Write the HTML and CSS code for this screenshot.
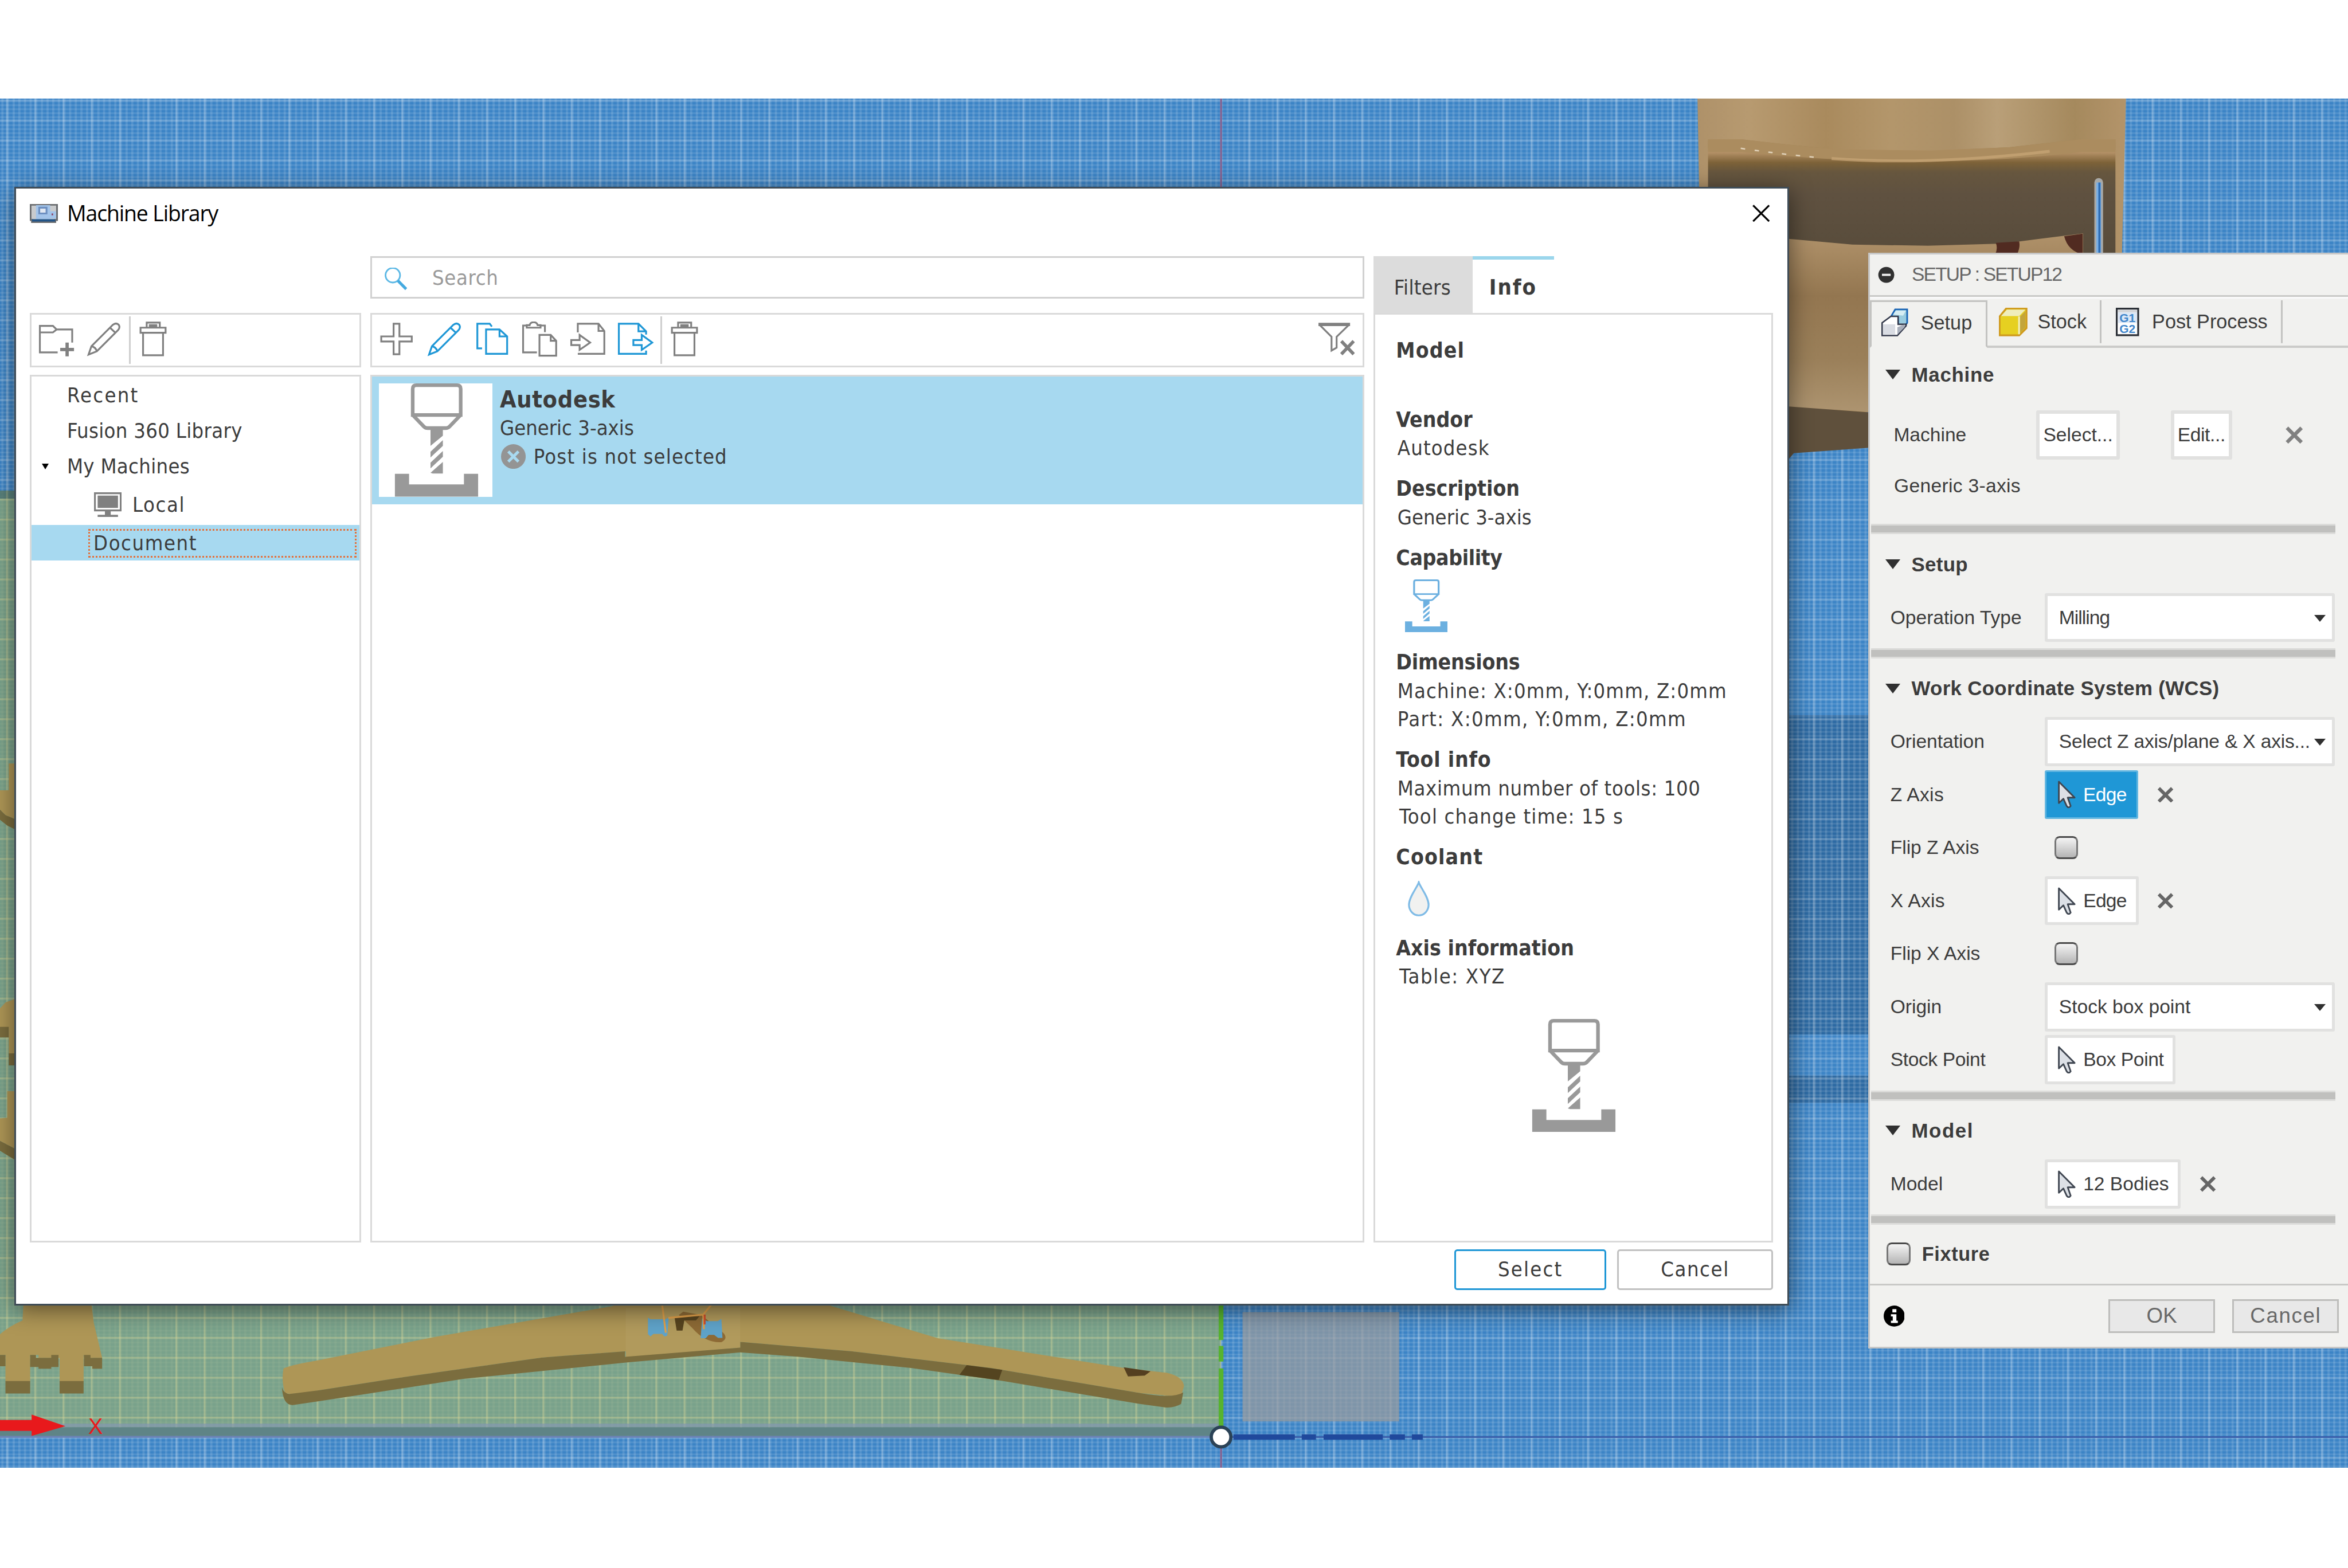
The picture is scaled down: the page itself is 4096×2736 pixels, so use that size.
FILE: index.html
```
<!DOCTYPE html>
<html lang="en">
<head>
<meta charset="utf-8">
<title>Machine Library</title>
<link rel="stylesheet" href="styles.css">
</head>
<body>
<svg class="defs" aria-hidden="true">
  <defs>
    <symbol id="i-folder" viewBox="0 0 100 100"><path d="M53 85H4V12H40L50 22H93V58M4 30H40L50 22"/><path class="thick" d="M79 58V96M60 77H98"/></symbol>
    <symbol id="i-pencil" viewBox="0 0 100 100"><path d="M7 91L15 68L74 9Q83 2 90 9Q95 16 88 24L30 82ZM15 68Q26 70 30 82M66 17L81 31"/></symbol>
    <symbol id="i-trash" viewBox="0 0 100 100"><path d="M16 17H85V31H16ZM23 31V93H78V31M33 16V3H69V16"/><path class="thick" d="M39 12H62"/></symbol>
    <symbol id="i-plus" viewBox="0 0 100 100"><path d="M42 6H58V41H92V55H58V90H42V55H8V41H42Z"/></symbol>
    <symbol id="i-copy" viewBox="0 0 100 100"><path d="M49 14L43 6H9V74H22M33 22H70L91 41V89H33ZM70 22V41H91"/></symbol>
    <symbol id="i-paste" viewBox="0 0 100 100"><path d="M42 85H4V11H14M52 11H64V29M14 17V10H22Q24 2 33 2Q42 2 44 10H52V17ZM49 37H80L95 53V94H49ZM80 37V53H95"/></symbol>
    <symbol id="i-import" viewBox="0 0 100 100"><path d="M22 30V6H79L95 26V89H22M79 6V26H95M4 51H27V37L56 58L27 78V65H4Z"/></symbol>
    <symbol id="i-export" viewBox="0 0 100 100"><path d="M79 36V27L58 6H4V89H79V80M58 6V27H79M44 51H67V37L96 58L67 78V65H44Z"/></symbol>
    <symbol id="i-filter" viewBox="0 0 100 100"><path d="M2 8L36 42V80L50 72V42L85 8"/><path class="thick" d="M0 8H87M63 54L97 90M97 54L63 90"/></symbol>
    <symbol id="i-mill" viewBox="0 0 312 312">
      <path fill="none" stroke="currentColor" stroke-width="10" d="M103 5H215Q225 5 225 15V87H93V15Q93 5 103 5ZM93 87L124 119Q128 123 134 123H184Q190 123 194 119L225 87"/>
      <path fill="currentColor" d="M142 125H176V144L142 172ZM176 156V172L142 204V188ZM176 186V202L142 234V218ZM176 216V248H148L142 246Z"/>
      <path fill="currentColor" d="M44 249H83V278H234V249H273V312H44Z"/>
    </symbol>
    <symbol id="i-cursor" viewBox="0 0 50 76"><path d="M2.5 3V62L15 50L24 70Q30 78 35 70L27 47H46Z" fill="#dce0e6" stroke="#3f4651" stroke-width="4.5" stroke-linejoin="round"/></symbol>
    <symbol id="i-x" viewBox="0 0 48 48"><path d="M4 4L44 44M44 4L4 44" fill="none" stroke="currentColor" stroke-width="10"/></symbol>
    <pattern id="minor" x="19.2" y="331" width="15.536" height="10.986" patternUnits="userSpaceOnUse"><path d="M0 0H6V10.986H0Z" fill="#fff" opacity=".12"/><path d="M0 0H15.536V4.500H0Z" fill="#fff" opacity=".11"/></pattern>
    <pattern id="major" x="16.7" y="328.5" width="77.68" height="54.93" patternUnits="userSpaceOnUse"><path d="M0 0H5V54.93H0Z" fill="#fff" opacity=".24"/><path d="M0 0H77.68V5H0Z" fill="#fff" opacity=".18"/></pattern>
    <pattern id="majorgreen" x="16.7" y="328.5" width="77.68" height="54.93" patternUnits="userSpaceOnUse"><path d="M0 0H5V54.93H0Z" fill="#e2dc95" opacity=".25"/><path d="M0 0H77.68V5H0Z" fill="#e2dc95" opacity=".25"/></pattern>
    <linearGradient id="wood" x1="0" x2="1" y1="0" y2="0"><stop offset="0" stop-color="#ae9169"/><stop offset=".12" stop-color="#b79a70"/><stop offset=".3" stop-color="#a98a5d"/><stop offset=".45" stop-color="#b3966b"/><stop offset=".6" stop-color="#ac9067"/><stop offset=".7" stop-color="#b99f78"/><stop offset=".88" stop-color="#a5895d"/><stop offset="1" stop-color="#b3946a"/></linearGradient>
    <linearGradient id="seat" x1="0" x2="0" y1="0" y2="1"><stop offset="0" stop-color="#b0926a"/><stop offset=".35" stop-color="#937650"/><stop offset=".7" stop-color="#9a7f59"/><stop offset="1" stop-color="#ad9470"/></linearGradient>
    <linearGradient id="curve" x1="0" x2="0" y1="0" y2="1"><stop offset="0" stop-color="#a88a5e"/><stop offset=".06" stop-color="#9c7f50"/><stop offset=".1" stop-color="#b8946a"/><stop offset=".19" stop-color="#7d6238"/><stop offset=".27" stop-color="#66563e"/><stop offset=".45" stop-color="#5f5140"/><stop offset="1" stop-color="#574b3a"/></linearGradient>
  </defs>
</svg>

<main class="scene">
  <svg class="canvas" viewBox="0 271 6461 3769" preserveAspectRatio="none">
    <rect y="271" width="6461" height="3769" fill="#3c84c6"/>
    <path d="M4900 1968H5160V2847H4900ZM4900 2960H5160V3035H4900Z" fill="#0d2f52" opacity=".3"/>
    <rect y="271" width="6461" height="3769" fill="url(#minor)"/>
    <rect y="271" width="6461" height="3769" fill="url(#major)"/>
    <rect y="1350" width="3360" height="2602" fill="#92ad74" opacity=".72"/>
    <rect y="1350" width="3360" height="22" fill="#2d5566" opacity=".45"/>
    <rect y="1350" width="3360" height="2602" fill="url(#majorgreen)"/>
    <rect y="3918" width="3360" height="10" fill="#8499b0" opacity=".7"/>
    <rect y="3928" width="3360" height="24" fill="#5f8486"/>
    <rect y="3952" width="3360" height="5" fill="#6b82b6"/>
    <path d="M3360 271V530M3360 3975V4040" stroke="#84608f" stroke-width="5"/>

    <g class="chair">
      <path d="M4671 271H5850L5839 700V900H5700L5300 1134H4920L4676 560Z" fill="url(#wood)"/>
      <path d="M4700 383H4792L4915 397L5048 411L5313 414L5529 405L5727 383H5821V720H4700Z" fill="url(#curve)"/>
      <path d="M4700 383H4792L4915 397L5048 411L5313 414L5529 405L5727 383H5821V418H5727Q5300 470 4792 418H4700Z" fill="#ab8c5f"/>
      <path d="M5040 436Q5300 456 5640 416" fill="none" stroke="#c9a678" stroke-width="8" opacity=".7"/>
      <path d="M4790 408Q4900 424 5000 433" fill="none" stroke="#f3ead8" stroke-width="4" stroke-dasharray="12 26" opacity=".75"/>
      <path d="M4900 655L5097 673L5305 676L5512 670L5732 642V720H5160V1134L4900 1119Z" fill="url(#seat)"/>
      <path d="M5492 668L5556 664Q5560 680 5550 700H5490Q5498 684 5492 668ZM5680 650L5731 643V700Q5690 690 5680 650Z" fill="#512b21"/>
      <path d="M4900 1117L5160 1136V1231L4936 1247L4923 1262H4900Z" fill="#5f503c"/>
      <path d="M5775 502V720" stroke="#a9a9a6" stroke-width="24" stroke-linecap="round"/>
      <path d="M5775 502V720" stroke="#7ab0e6" stroke-width="13"/><path d="M5777 502V720" stroke="#2f6db4" stroke-width="6"/>
    </g>

    <g fill="#ae9656">
      <path d="M0 2175H24V2101H46V2256L15 2243L0 2228Z"/>
      <path d="M0 2775L15 2759L46 2747V2902H24V2828H0Z"/>
      <path d="M0 3078L20 3076V3003H46V3164L0 3140Z"/>
      <path d="M66 3560H248L258 3640L281 3737H231V3729H230V3802H164V3737H106V3729H83V3802H15V3729H0V3672Q25 3650 62 3634Z"/>
      <path d="M780 3767Q784 3760 880 3743L1193 3680L1684 3595L1740 3570H2250L2287 3594L2580 3683L2756 3711L3093 3765L3210 3778Q3255 3788 3258 3815L3252 3836Q3235 3844 3200 3840L3137 3834L2727 3765L2345 3719L2037 3693V3709L1722 3735V3719L1492 3736L1110 3790L880 3826Q800 3840 784 3834Q774 3800 780 3767Z"/>
    </g>
    <path d="M1722 3600H2037V3709L1722 3735Z" fill="#b39d60" opacity=".6"/>
    <g fill="#7b6d3e">
      <path d="M0 2228L15 2243L46 2256V2285L20 2272L0 2256ZM0 2826H24V2855H0ZM24 2899H46V2932H24ZM0 3140L46 3164V3195L0 3167Z"/>
      <path d="M15 3801H83V3835H15ZM164 3801H230V3835H164ZM83 3729H99V3737H141V3729H161V3762H141V3767H106V3762H83ZM231 3729H249V3737H281V3767H254V3760H231ZM0 3729H15V3760H0Z"/>
      <path d="M776 3818Q782 3838 800 3836L880 3826L1110 3790L1492 3736L1720 3719V3734L2037 3709V3693L2345 3719L2727 3765L3137 3834Q3230 3850 3256 3832L3250 3864Q3230 3876 3203 3873L3137 3864L2756 3800L2507 3765L2199 3734L2037 3722L1722 3750L1275 3795L880 3856L805 3867Q778 3866 776 3818Z"/>
    </g>
    <path d="M2660 3757L2758 3770L2748 3798L2640 3784Z" fill="#544420"/>
    <path d="M3092 3763L3166 3774L3150 3786L3104 3788Z" fill="#543f20"/>
    <path d="M1868 3619L1880 3610L1930 3619L1980 3660Q2010 3680 1985 3694Q1940 3696 1905 3655Z" fill="#8d6a35"/>
    <path d="M1856 3625L1925 3622L1915 3634H1883L1878 3662H1862Z" fill="#57441f"/>
    <path d="M1783 3626L1790 3631H1832L1840 3626L1836 3676L1828 3678L1822 3671H1798L1790 3678L1783 3672ZM1932 3628L1945 3636H1975L1985 3630L1988 3682H1976L1965 3674H1950L1942 3683H1928Z" fill="#5fa3c9"/>
    <path d="M1822 3590L1832 3668M1839 3627L1935 3618M1958 3590L1935 3618L1937 3658" fill="none" stroke="#e0a04a" stroke-width="5"/>
    <path d="M1939 3618V3645" stroke="#d04a2a" stroke-width="5"/>

    <rect x="3419" y="3611" width="431" height="301" fill="#999b9e" opacity=".72"/>
    <path d="M3360 3580V3688M3360 3704V3747M3360 3766V3935" stroke="#57b32f" stroke-width="13"/>
    <path d="M3380 3955H6461" stroke="#3a5fab" stroke-width="5"/>
    <path d="M3394 3955H3563M3582 3955H3621M3642 3955H3805M3824 3955H3866M3885 3955H3915" stroke="#20499c" stroke-width="15"/>
    <circle cx="3360" cy="3955" r="27" fill="#fff" stroke="#2b4256" stroke-width="9"/>
    <path d="M0 3908H87V3893L180 3925L87 3952V3938H0Z" fill="#e8191c"/>
    <text class="axis" x="243" y="3946" textLength="42">X</text>
  </svg>

  <section class="dialog">
    <header class="titlebar">
      <svg class="appicon" viewBox="0 0 77 52"><path d="M2 2H75V44H70V50H6V44H2Z" fill="#c9cbcd" stroke="#6b6d70" stroke-width="5"/><path d="M17 3H56V42H17ZM56 20H72V40H56Z" fill="#a3c4ea"/><path d="M26 10H46V26H26Z" fill="#dfe7f2" stroke="#6d8fc0" stroke-width="5"/><path d="M60 26H64V31H60Z" fill="#8b3a5a"/><path d="M6 42H70V48H6Z" fill="#225487"/></svg>
      <h1 class="sn18">Machine Library</h1>
      <svg class="close" viewBox="0 0 48 48"><path d="M2 2L46 46M46 2L2 46" stroke="#000" stroke-width="5"/></svg>
    </header>
    <div class="cols">
      <div class="col side">
        <div class="toolbar">
          <svg class="ic"><use href="#i-folder"/></svg>
          <svg class="ic"><use href="#i-pencil"/></svg>
          <i class="bar"></i>
          <svg class="ic"><use href="#i-trash"/></svg>
        </div>
        <ul class="box tree">
          <li class="s34">Recent</li>
          <li class="s05">Fusion 360 Library</li>
          <li class="s05 open">My Machines</li>
          <li class="local s25"><svg class="monitor" viewBox="0 0 76 68"><path d="M2.500 2.500H73.500V50H2.500Z" fill="#fff" stroke="#808080" stroke-width="5"/><path d="M10 9H66V43H10ZM30 50H46V62H66V68H10V62H30Z" fill="#808080"/></svg>Local</li>
          <li class="doc"><span class="s25">Document</span></li>
        </ul>
      </div>
      <div class="col">
        <div class="search">
          <svg viewBox="0 0 64 62"><circle cx="24" cy="21" r="20" fill="none" stroke="#5cb8e5" stroke-width="4.500"/><path d="M38 36L61 59" stroke="#45aae0" stroke-width="8"/></svg>
          <span class="s1">Search</span>
        </div>
        <div class="toolbar">
          <svg class="ic"><use href="#i-plus"/></svg>
          <svg class="ic blue"><use href="#i-pencil"/></svg>
          <svg class="ic blue"><use href="#i-copy"/></svg>
          <svg class="ic"><use href="#i-paste"/></svg>
          <svg class="ic"><use href="#i-import"/></svg>
          <svg class="ic blue"><use href="#i-export"/></svg>
          <i class="bar"></i>
          <svg class="ic"><use href="#i-trash"/></svg>
          <svg class="ic end"><use href="#i-filter"/></svg>
        </div>
        <div class="box">
          <article class="machine">
            <svg class="thumb"><use href="#i-mill"/></svg>
            <div>
              <h2 class="s1">Autodesk</h2>
              <p>Generic 3-axis</p>
              <p class="warn s18"><svg viewBox="0 0 68 68"><circle cx="34" cy="34" r="34" fill="#949494"/><path d="M20 20L48 48M48 20L20 48" stroke="#a8d9f0" stroke-width="8"/></svg>Post is not selected</p>
            </div>
          </article>
        </div>
      </div>
      <div class="col info">
        <nav class="tabs"><span class="s05">Filters</span><b class="s3">Info</b></nav>
        <div class="box details">
          <h3 class="s18 first">Model</h3>
          <h3>Vendor</h3><p class="s18">Autodesk</p>
          <h3>Description</h3><p>Generic 3-axis</p>
          <h3 class="sn07">Capability</h3>
          <svg class="cap" viewBox="44 0 229 312" preserveAspectRatio="none"><use href="#i-mill" width="312" height="312"/></svg>
          <h3 class="sn03">Dimensions</h3><p class="s18">Machine: X:0mm, Y:0mm, Z:0mm</p><p class="s2">Part: X:0mm, Y:0mm, Z:0mm</p>
          <h3 class="s12">Tool info</h3><p class="s1">Maximum number of tools: 100</p><p class="s18 in">Tool change time: 15 s</p>
          <h3 class="s18">Coolant</h3>
          <svg class="drop" viewBox="0 0 60 98"><path d="M30 4C34 18 57 44 57 66A27 29 0 0 1 3 66C3 44 26 18 30 4Z" fill="#f1f1f0" stroke="#7fbbe6" stroke-width="5"/></svg>
          <h3>Axis information</h3><p class="s25 in">Table: XYZ</p>
          <svg class="big"><use href="#i-mill"/></svg>
        </div>
      </div>
    </div>
    <footer class="actions"><button class="primary s34">Select</button><button class="s25">Cancel</button></footer>
  </section>

  <aside class="panel">
    <header class="phead">
      <svg viewBox="0 0 46 46"><circle cx="23" cy="23" r="22" fill="#303030"/><path d="M11 23H35" stroke="#eee" stroke-width="6"/></svg>
      <span class="sn3">SETUP : SETUP12</span>
    </header>
    <nav class="ptabs">
      <div class="ptab on">
        <svg viewBox="0 0 74 78"><path d="M28 20L38 3H71V40L60 54H46V26H26Z" fill="#9accdf" stroke="#1763b4" stroke-width="4.500"/><path d="M32 17L40 6H68L60 20Z" fill="#d6edf3"/><path d="M2 40L26 22H46V44H68V48L44 75H2Z" fill="#fff" stroke="#343a4c" stroke-width="4"/><path d="M5 44H38V72H5Z" fill="#d9dce3"/><path d="M44 52L64 44V52L44 72Z" fill="#a9afbb"/></svg>
        <span>Setup</span>
      </div>
      <div class="ptab stock">
        <svg viewBox="0 0 78 78"><path d="M2 24L20 2H76V56L56 76H2Z" fill="#e6d021" stroke="#cf9a1e" stroke-width="5"/><path d="M6 23L22 5H73L56 23Z" fill="#efedbc"/><path d="M58 25L73 9V54L58 70Z" fill="#c4a53a"/><path d="M53 24H58V73H53Z" fill="#f1eebb"/></svg>
        <span>Stock</span>
      </div>
      <div class="ptab post">
        <svg viewBox="0 0 64 78"><path d="M2.500 2.500H61.500V75.500H2.500Z" fill="#fff" stroke="#2b2f36" stroke-width="5"/><path d="M6 6H58V13H6Z" fill="#d4d6d9"/><path d="M6 13H58V42H6Z" fill="#dde8f6"/><text class="gcode" x="10" y="40">G1</text><text class="gcode" x="10" y="69">G2</text></svg>
        <span>Post Process</span>
      </div>
      <div class="rest"></div>
    </nav>

    <section class="sec first">
      <h4 class="s12">Machine</h4>
      <div class="row machine-row"><label>Machine</label><button>Select...</button><button class="edit sn07">Edit...</button><svg class="del"><use href="#i-x"/></svg></div>
      <p class="s05">Generic 3-axis</p>
    </section>
    <section class="sec">
      <h4 class="s05">Setup</h4>
      <div class="row"><label>Operation Type</label><div class="select"><span class="sn15">Milling</span></div></div>
    </section>
    <section class="sec">
      <h4 class="s05">Work Coordinate System (WCS)</h4>
      <div class="row"><label>Orientation</label><div class="select"><span class="sn03">Select Z axis/plane &amp; X axis...</span></div></div>
      <div class="row"><label class="s05">Z Axis</label><div class="pick on"><svg><use href="#i-cursor"/></svg><span class="sn1">Edge</span></div><svg class="x"><use href="#i-x"/></svg></div>
      <div class="row"><label>Flip Z Axis</label><i class="check"></i></div>
      <div class="row"><label class="s05">X Axis</label><div class="pick"><svg><use href="#i-cursor"/></svg><span class="sn1">Edge</span></div><svg class="x"><use href="#i-x"/></svg></div>
      <div class="row"><label>Flip X Axis</label><i class="check"></i></div>
      <div class="row"><label>Origin</label><div class="select"><span>Stock box point</span></div></div>
      <div class="row"><label class="sn07">Stock Point</label><div class="pick"><svg><use href="#i-cursor"/></svg><span class="sn07">Box Point</span></div></div>
    </section>
    <section class="sec">
      <h4 class="s25">Model</h4>
      <div class="row"><label>Model</label><div class="pick"><svg><use href="#i-cursor"/></svg><span>12 Bodies</span></div><svg class="x"><use href="#i-x"/></svg></div>
    </section>
    <div class="fixture"><i class="check"></i><b class="s1">Fixture</b></div>
    <footer class="pfoot">
      <svg viewBox="0 0 58 58"><circle cx="29" cy="29" r="29" fill="#000"/><path d="M24 10H35V19H24ZM20 24H35V42H39V48H20V42H25V30H20Z" fill="#fff"/></svg>
      <button>OK</button><button class="s25">Cancel</button>
    </footer>
  </aside>
</main>
</body>
</html>
```
FILE: styles.css
```
/* 1rem = 100 design units; the design is 6461 units wide */
html { font-size: 63.396px; }
* { box-sizing: border-box; margin: 0; padding: 0; }
body { background: #fff; width: 64.61rem; height: 43.157rem; overflow: hidden; font-family: "DejaVu Sans Condensed", "DejaVu Sans", sans-serif; font-size: .57rem; color: #3c3c3c; }
.defs { position: absolute; width: 0; height: 0; }
svg { display: block; flex: none; }
h1, h2, h3, h4, p, span, label, li, b { white-space: nowrap; }
button { font: inherit; color: inherit; white-space: nowrap; }

/* letter spacing steps */
.sn3 { letter-spacing: -.029rem; } .sn18 { letter-spacing: -.018rem; } .sn15 { letter-spacing: -.015rem; }
.sn1 { letter-spacing: -.011rem; } .sn07 { letter-spacing: -.006rem; } .sn03 { letter-spacing: -.003rem; }
.s05 { letter-spacing: .005rem; } .s1 { letter-spacing: .01rem; } .s12 { letter-spacing: .012rem; }
.s18 { letter-spacing: .018rem; } .s2 { letter-spacing: .021rem; } .s25 { letter-spacing: .025rem; }
.s3 { letter-spacing: .031rem; } .s34 { letter-spacing: .035rem; }

.scene { position: relative; height: 100%; padding-top: 2.71rem; }
.canvas { width: 64.61rem; height: 37.69rem; }
.axis { font: 60px "Liberation Sans", sans-serif; fill: #e8191c; }

/* Machine library window */
.dialog { position: absolute; left: .39rem; top: 5.14rem; width: 48.84rem; height: 30.8rem; border: .05rem solid #3f4c57; background: #fff; display: flex; flex-direction: column; box-shadow: .02rem .12rem .6rem rgba(0,0,0,.5); }
.titlebar { height: 1.38rem; display: flex; align-items: center; padding: 0 .48rem 0 .39rem; }
.titlebar h1 { font: 400 .59rem/1.4rem "Open Sans", sans-serif; color: #000; margin-left: .25rem; flex: 1; }
.appicon { width: .77rem; height: .52rem; }
.close { width: .48rem; height: .48rem; }
.cols { display: grid; grid-template-columns: 9.11rem 27.35rem 11rem; gap: .25rem; height: 27.15rem; margin: .48rem 0 0 .39rem; }
.col { display: flex; flex-direction: column; min-height: 0; }
.side { padding-top: 1.56rem; }
.toolbar { height: 1.5rem; border: .05rem solid #dadada; display: flex; align-items: center; gap: .315rem; padding: 0 .21rem 0 .18rem; margin-bottom: .21rem; flex: none; }
.ic { width: 1rem; height: 1rem; fill: none; stroke: #808080; stroke-width: 5; overflow: visible; }
.thick { stroke-width: 9; }
.blue { stroke: #1f97d6; }
.end { margin-left: auto; }
.bar { width: .05rem; height: 1.31rem; background: #cfcfcf; margin: 0 -.21rem 0 -.13rem; }
.box { flex: 1; border: .05rem solid #dadada; }
.search { height: 1.17rem; border: .05rem solid #d1d1d1; margin-bottom: .39rem; display: flex; align-items: center; padding-left: .33rem; gap: .69rem; color: #9a9a9a; }
.search svg { width: .64rem; height: .62rem; margin-top: .1rem; }
.search span { line-height: 1; margin-top: .04rem; }

.tree { list-style: none; padding-top: .03rem; }
.tree li { height: .98rem; line-height: .97rem; padding-left: .97rem; }
.tree .open { position: relative; }
.tree .open::before { content: ""; position: absolute; left: .27rem; top: .4rem; border: .105rem solid transparent; border-top: .16rem solid #000; border-bottom: 0; }
.tree .local { height: 1.12rem; line-height: 1.12rem; display: flex; align-items: center; padding-left: 1.71rem; gap: .3rem; }
.monitor { width: .76rem; height: .68rem; }
.tree .doc { background: #a7d9f0; padding: .1rem .08rem .1rem 1.56rem; }
.doc span { display: block; height: .78rem; line-height: .7rem; border: .05rem dotted #e4703a; padding-left: .09rem; margin-top: .01rem; }

.machine { height: 3.51rem; background: #a7d9f0; display: flex; padding: .19rem; gap: .21rem; }
.thumb { width: 3.12rem; height: 3.12rem; background: #fff; color: #999; }
.machine h2 { font-size: .65rem; line-height: .8rem; margin-top: .04rem; }
.machine p { line-height: .78rem; }
.machine .warn { display: flex; align-items: center; gap: .22rem; padding-left: .03rem; }
.warn svg { width: .68rem; height: .68rem; }

.tabs { height: 1.57rem; display: flex; line-height: 1.74rem; flex: none; }
.tabs span { width: 2.73rem; background: #dcdcdc; padding-left: .57rem; }
.tabs b { width: 2.24rem; border-top: .1rem solid #9bd6ec; padding-left: .46rem; line-height: 1.54rem; font-size: .6rem; }
.details { padding: .59rem 0 0 .58rem; }
.details h3 { font-size: .585rem; line-height: .78rem; margin-top: .34rem; }
.details h3.first { margin: 0 0 1.13rem; }
.details h3.first + h3 { margin-top: 0; }
.details p { line-height: .78rem; padding-left: .04rem; }
.details p.in { padding-left: .09rem; }
.cap { width: 1.17rem; height: 1.45rem; color: #6cb0e0; margin: .2rem 0 .1rem .24rem; }
.cap + h3 { margin-top: .45rem; }
.drop { width: .6rem; height: .98rem; margin: .26rem 0 .1rem .33rem; }
.drop + h3 { margin-top: .48rem; }
.big { width: 3.12rem; height: 3.12rem; color: #999; margin: .775rem 0 0 3.31rem; }

.actions { display: flex; justify-content: flex-end; gap: .3rem; margin: .19rem .4rem 0 0; }
.actions button { width: 4.28rem; height: 1.12rem; border: .05rem solid #c1c1c1; border-radius: .08rem; background: #fff; padding-bottom: .03rem; }
.actions .primary { width: 4.18rem; border-color: #1f97d6; }

/* Setup panel */
.panel { position: absolute; left: 51.4rem; top: 6.95rem; width: 13.21rem; height: 30.17rem; border: .05rem solid #c6c6c6; border-right: 0; background: #f1f1ef; font-family: "Liberation Sans", Arial, sans-serif; font-size: .53rem; display: flex; flex-direction: column; overflow: hidden; }
.phead { height: 1.17rem; border-bottom: .05rem solid #c9c9c7; display: flex; align-items: center; padding-left: .23rem; gap: .47rem; color: #666; flex: none; }
.phead svg { width: .46rem; height: .46rem; }
.ptabs { height: 1.4rem; border-top: .05rem solid #fafafa; display: flex; padding-top: .05rem; flex: none; font-size: .54rem; }
.ptab { display: flex; align-items: center; border-bottom: .07rem solid #cbcbc9; padding-bottom: .04rem; }
.ptab.on { width: 3.24rem; border: .05rem solid #c3c3c1; border-bottom-color: transparent; padding-left: .28rem; padding-bottom: .07rem; }
.on svg { width: .74rem; height: .78rem; margin-right: .34rem; }
.stock { width: 3.15rem; padding-left: .32rem; }
.stock svg { width: .78rem; height: .78rem; margin-right: .28rem; }
.post { width: 4.98rem; padding-left: .39rem; }
.post svg { width: .64rem; height: .78rem; margin-right: .35rem; }
.stock, .post { background: linear-gradient(#c3c3c1, #c3c3c1) right top / .05rem 1.18rem no-repeat; }
.rest { flex: 1; border-bottom: .07rem solid #cbcbc9; }
.gcode { font: 700 33px "Liberation Sans", sans-serif; fill: #3f86cb; }

.sec { flex: none; padding-bottom: .395rem; position: relative; }
.sec::after { content: ""; display: block; position: absolute; left: .04rem; right: .35rem; bottom: 0; height: .19rem; background: #c0c0be; border: solid #dcdcda; border-width: .05rem 0; }
.sec.first { height: 5.14rem; }
.sec h4 { font-size: .55rem; height: 1.56rem; line-height: 1.44rem; padding: .1rem 0 0 1.15rem; position: relative; }
.sec.first h4 { height: 1.48rem; padding-top: 0; line-height: 1.48rem; }
.sec h4::before { content: ""; position: absolute; left: .43rem; bottom: .6rem; border: .21rem solid transparent; border-top: .27rem solid #303030; border-bottom: 0; }
.row { height: 1.46rem; display: flex; align-items: center; padding-left: .57rem; }
.row label { width: 4.25rem; }
.row button { height: 1.35rem; width: 2.31rem; background: #fff; border: .1rem solid #e1e1e0; border-radius: .05rem; }
.machine-row { height: 1.85rem; padding-left: .66rem; }
.machine-row label { width: 3.92rem; }
.row .edit { width: 1.68rem; margin-left: 1.4rem; }
.del { width: .48rem; height: .48rem; margin-left: 1.47rem; color: #808080; }
.sec > p { line-height: .96rem; padding-left: .67rem; }
.select { width: 7.98rem; height: 1.35rem; background: #fff; border: .08rem solid #e1e1e0; border-radius: .05rem; display: flex; align-items: center; padding-left: .31rem; position: relative; }
.select::after { content: ""; position: absolute; right: .18rem; top: .52rem; border: .16rem solid transparent; border-top: .19rem solid #303030; border-bottom: 0; }
.pick { height: 1.35rem; background: #fff; border: .08rem solid #e1e1e0; border-radius: .05rem; display: flex; align-items: center; padding: 0 .25rem 0 .29rem; }
.pick svg { width: .5rem; height: .76rem; margin: 0 .19rem 0 0; }
.pick.on { background: #1f97d6; border-color: #62b6e0; border-width: .05rem; padding: 0 .28rem 0 .32rem; color: #fff; }
.x { width: .46rem; height: .44rem; margin-left: .51rem; color: #666; }
.check { display: block; width: .66rem; height: .63rem; border: .05rem solid #4a4a4a; border-left-color: #777; border-right-color: #777; border-radius: .14rem; background: linear-gradient(#f4f4f4, #b4b4b4); }
.row .check { margin-left: .26rem; }
.fixture { height: 1.62rem; display: flex; align-items: center; padding-left: .47rem; gap: .31rem; font-size: .54rem; flex: none; }
.pfoot { flex: 1; border-top: .05rem solid #c9c9c7; display: flex; align-items: center; padding: 0 .25rem 0 .38rem; font-size: .58rem; color: #686868; }
.pfoot svg { width: .58rem; height: .58rem; margin-right: auto; }
.pfoot button { width: 2.93rem; height: .92rem; border: .05rem solid #bdbdbb; background: #e8e8e8; margin-left: .48rem; }
```
